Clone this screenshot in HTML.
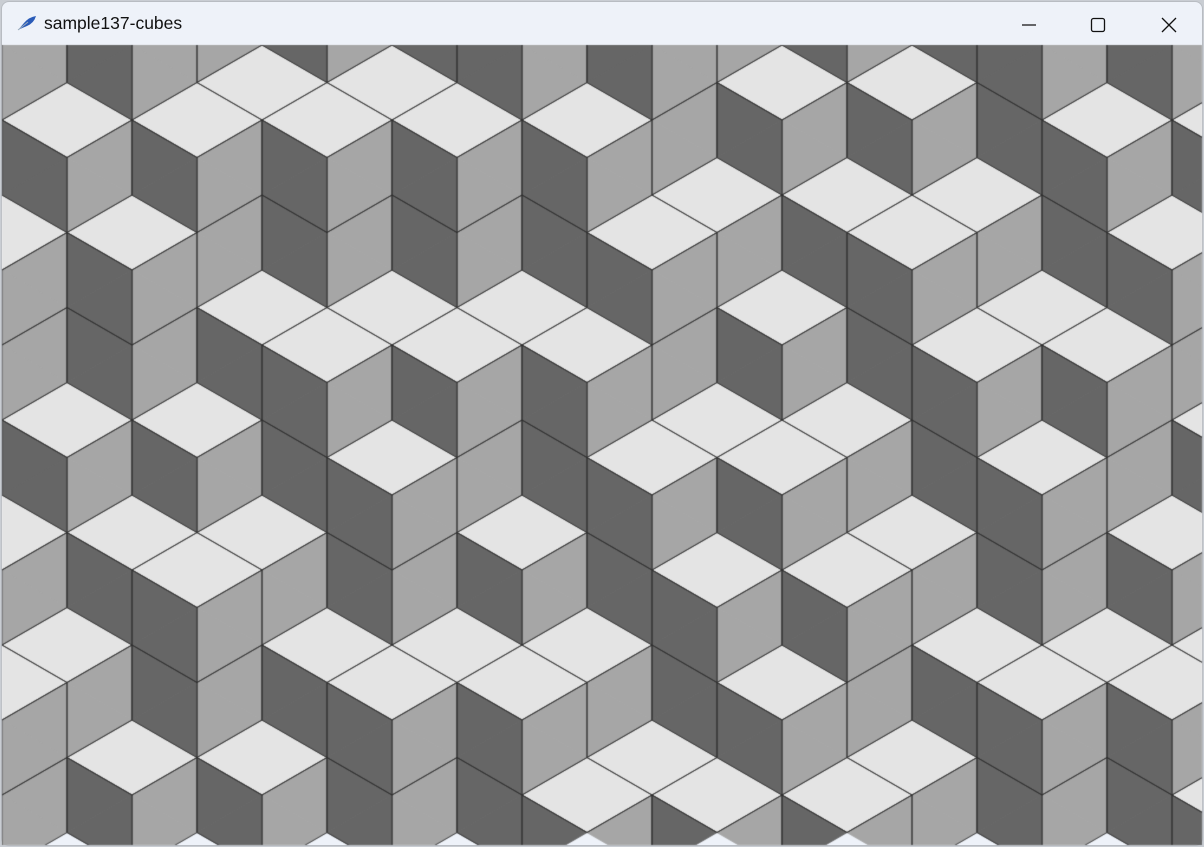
<!DOCTYPE html>
<html><head><meta charset="utf-8"><style>
html,body{margin:0;padding:0;width:1204px;height:847px;overflow:hidden;background:#c9cdd3;}
#win{position:absolute;left:1px;top:1px;width:1202px;height:845px;background:#eef2f9;border-radius:8px;overflow:hidden;border:1px solid #b8bcc2;box-sizing:border-box;}
#title{position:absolute;left:42px;top:11px;font:17.5px "Liberation Sans",sans-serif;color:#111;}
canvas{position:absolute;left:0;top:0;z-index:5;}
</style></head><body>
<div id="win">
<svg style="position:absolute;left:14px;top:12px" width="22" height="18" viewBox="0 0 22 18"><path d="M2 16 L8 9 Q13 3 20 2 Q18 9 11 12 Q6 14 2 16Z" fill="#2a5bb8"/><path d="M2 16 L12 8" stroke="#9ab" stroke-width="1"/></svg>
<div id="title">sample137-cubes</div>
<svg style="position:absolute;left:1015px;top:12px" width="180" height="22">
<line x1="5" y1="11" x2="19" y2="11" stroke="#111" stroke-width="1.2"/>
<rect x="74.5" y="4.5" width="13" height="13" rx="2" fill="none" stroke="#111" stroke-width="1.3"/>
<path d="M145 4 L159 18 M159 4 L145 18" stroke="#111" stroke-width="1.3"/>
</svg>
</div>
<canvas id="c" width="1204" height="847"></canvas>
<script>
var S=["MMLDDLMMMMLDDLMMLLMMMM","DDLMMLDDDDLMMLDDLMMLDD","MMLDDLMMMMLDDLLDDDDLMM","MLLMMMMLDDLMMLLMMMMLDD","DLLDDDDLLDDDDLMMLDDLMM","MLLMMMMLLMMLDDDDLLDDDD","DLLDDDDLLDDLMMMMLLMMMM","DDLMMMMLLMMMMLDDLLDDDD","MMLDDDDLLDDDDLMMLLMMLD","DDLMMLDDLMMLDDDDLMMLLM","MMMMLLMMMMLLMMLDDDDLLD","MLDDLMMLDDLLDDLMMLDDLM","DLMMLDDLMMLLMMLDDLMMLD","MLDDLLDDDDLMMLLMMMMLLM","DLMMLLMMLDDDDLMMLDDLMM","DDDDLMMLLMMLDDDDLLDDDD","MMLDDDDLLDDLMMMMLLMMMM","DDLMMLDDLMMMMLDDLLDDDD","MMLDDLMMMMLDDLMMLLMMLD"];
var C={L:'#e4e4e4',D:'#666666',M:'#a6a6a6'};
var c=document.getElementById('c'),x=c.getContext('2d');
x.save();x.beginPath();x.rect(2,45,1200,800);x.clip();
function tri(k,j){var x0=2+65*k,x1=x0+65,cy=45+37.5*j,A=((j-k)%2+2)%2==0;
 if(A)return{A:true,p:[[x0,cy],[x1,cy-37.5],[x1,cy+37.5]]};
 return{A:false,p:[[x1,cy],[x0,cy-37.5],[x0,cy+37.5]]};}
for(var k=0;k<S.length;k++)for(var j=0;j<22;j++){var t=tri(k,j),col=C[S[k][j]];
 x.beginPath();x.moveTo(t.p[0][0],t.p[0][1]);x.lineTo(t.p[1][0],t.p[1][1]);x.lineTo(t.p[2][0],t.p[2][1]);x.closePath();
 x.fillStyle=col;x.strokeStyle=col;x.lineWidth=1;x.fill();x.stroke();}
x.strokeStyle='rgba(45,45,45,0.85)';x.lineWidth=1;
function ln(a,b){x.beginPath();x.moveTo(a[0],a[1]);x.lineTo(b[0],b[1]);x.stroke();}
for(var k=0;k<S.length;k++)for(var j=0;j<22;j++){var t=tri(k,j),f=S[k][j],p=t.p;
 var sh;
 if(f=='L')sh='base';
 else if(f=='D')sh=t.A?'up':'down';
 else sh=t.A?'down':'up';
 if(sh!='base')ln(p[1],p[2]);
 if(sh!='up')ln(p[0],p[1]);
 if(sh!='down')ln(p[0],p[2]);
}
x.restore();
</script>
</body></html>
